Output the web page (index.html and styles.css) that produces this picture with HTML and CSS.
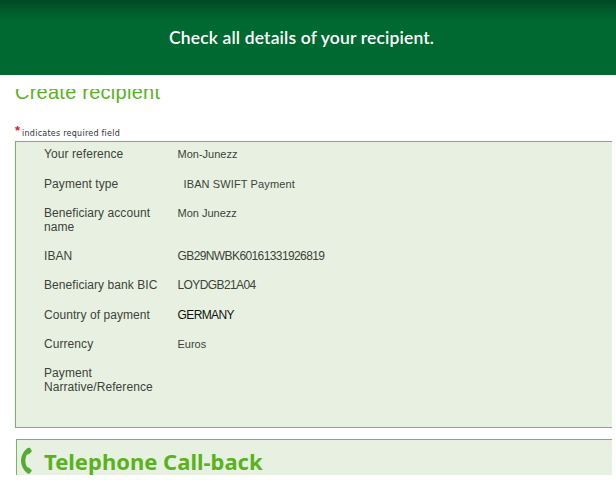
FILE: index.html
```html
<!DOCTYPE html>
<html lang="en">
<head>
    <meta charset="UTF-8">
    <meta name="viewport" content="width=device-width, initial-scale=1.0">
    <title>Create recipient</title>
    <link rel="stylesheet" href="styles.css">
</head>
<body>
    <header class="banner"><span>Check all details of your recipient.</span></header>

    <main class="content">
        <div class="title-wrap">
            <h1>Create recipient</h1>
        </div>
        <p class="required"><span class="star">*</span> <span class="note">indicates required field</span></p>

        <dl class="details">
            <dt>Your reference</dt>
            <dd>Mon-Junezz</dd>
            <dt>Payment type</dt>
            <dd class="indent">IBAN SWIFT Payment</dd>
            <dt>Beneficiary account name</dt>
            <dd>Mon Junezz</dd>
            <dt>IBAN</dt>
            <dd class="code">GB29NWBK60161331926819</dd>
            <dt>Beneficiary bank BIC</dt>
            <dd class="code">LOYDGB21A04</dd>
            <dt>Country of payment</dt>
            <dd class="country">GERMANY</dd>
            <dt>Currency</dt>
            <dd>Euros</dd>
            <dt>Payment Narrative/Reference</dt>
            <dd></dd>
        </dl>

        <section class="callback">
            <svg class="phone" width="14" height="28" viewBox="0 0 14 28">
                <path d="M7.5 1 L10 .7 L12 4.2 L8.8 7.2 L7.2 7.3 C4.8 11.5 4.8 16 7.2 20.3 L8.8 20.4 L12 23.5 L9.5 26.8 L7.5 26.5 C-1.2 19.5 -1.2 8 7.5 1 Z" fill="#55ac35"/>
            </svg>
            <h2>Telephone Call-back</h2>
        </section>
    </main>
</body>
</html>
```
FILE: styles.css
```css
* {
    box-sizing: border-box;
    margin: 0;
    padding: 0;
}
body {
    font-family: "Liberation Sans", Arial, sans-serif;
    height: 480px;
    background: #fff;
    overflow: hidden;
}
.banner {
    height: 75px;
    background: linear-gradient(to bottom, #004824 0, #00582b 9px, #006831 20px);
    color: #fff;
    font-family: Lato, sans-serif;
    font-size: 17.5px;
    font-weight: 600;
    letter-spacing: 0.15px;
    line-height: 75px;
    text-align: center;
    padding-right: 13px;
}
.content {
    padding: 14px 4px 0 15px;
}
.title-wrap {
    height: 17px;
    overflow: hidden;
}
h1 {
    font-size: 20px;
    font-weight: normal;
    letter-spacing: 0.25px;
    line-height: 24px;
    margin-top: -9px;
    color: #58b31e;
}
.required {
    height: 35px;
    padding-top: 18px;
    display: flex;
    align-items: flex-start;
    gap: 2px;
    white-space: nowrap;
}
.star {
    color: #e01a1a;
    font-size: 13px;
    font-weight: bold;
    line-height: 13px;
}
.note {
    font-family: "DejaVu Sans", sans-serif;
    font-size: 8px;
    letter-spacing: 0.25px;
    line-height: 12px;
    padding-top: 4px;
    color: #333;
}
.details {
    height: 287px;
    display: grid;
    grid-template-columns: 120px 1fr;
    column-gap: 13.5px;
    row-gap: 15.25px;
    align-content: start;
    padding: 5.3px 0 0 28px;
    background: #e8f1e1;
    border: 1px solid #75b956;
    border-right: none;
    font-size: 12px;
    line-height: 14px;
    color: #3d423b;
}
.details dt {
    letter-spacing: 0.07px;
}
.details dd {
    font-size: 11px;
}
.details .indent {
    padding-left: 6px;
    letter-spacing: 0.12px;
}
.details .code {
    font-size: 12px;
    letter-spacing: -0.6px;
}
.details .country {
    font-size: 12px;
    letter-spacing: -0.6px;
    color: #111;
}
.callback {
    height: 36px;
    margin: 11px 0 0 1px;
    display: flex;
    background: #e8f1e1;
    border: 1px solid #75b956;
    border-width: 1px 0 0 1px;
    overflow: hidden;
}
.phone {
    margin: 7px 0 0 3px;
    flex: none;
}
h2 {
    font-family: "Noto Sans", sans-serif;
    font-size: 22px;
    font-weight: bold;
    line-height: 26px;
    margin: 8px 0 0 10px;
    color: #58b31e;
}
```
